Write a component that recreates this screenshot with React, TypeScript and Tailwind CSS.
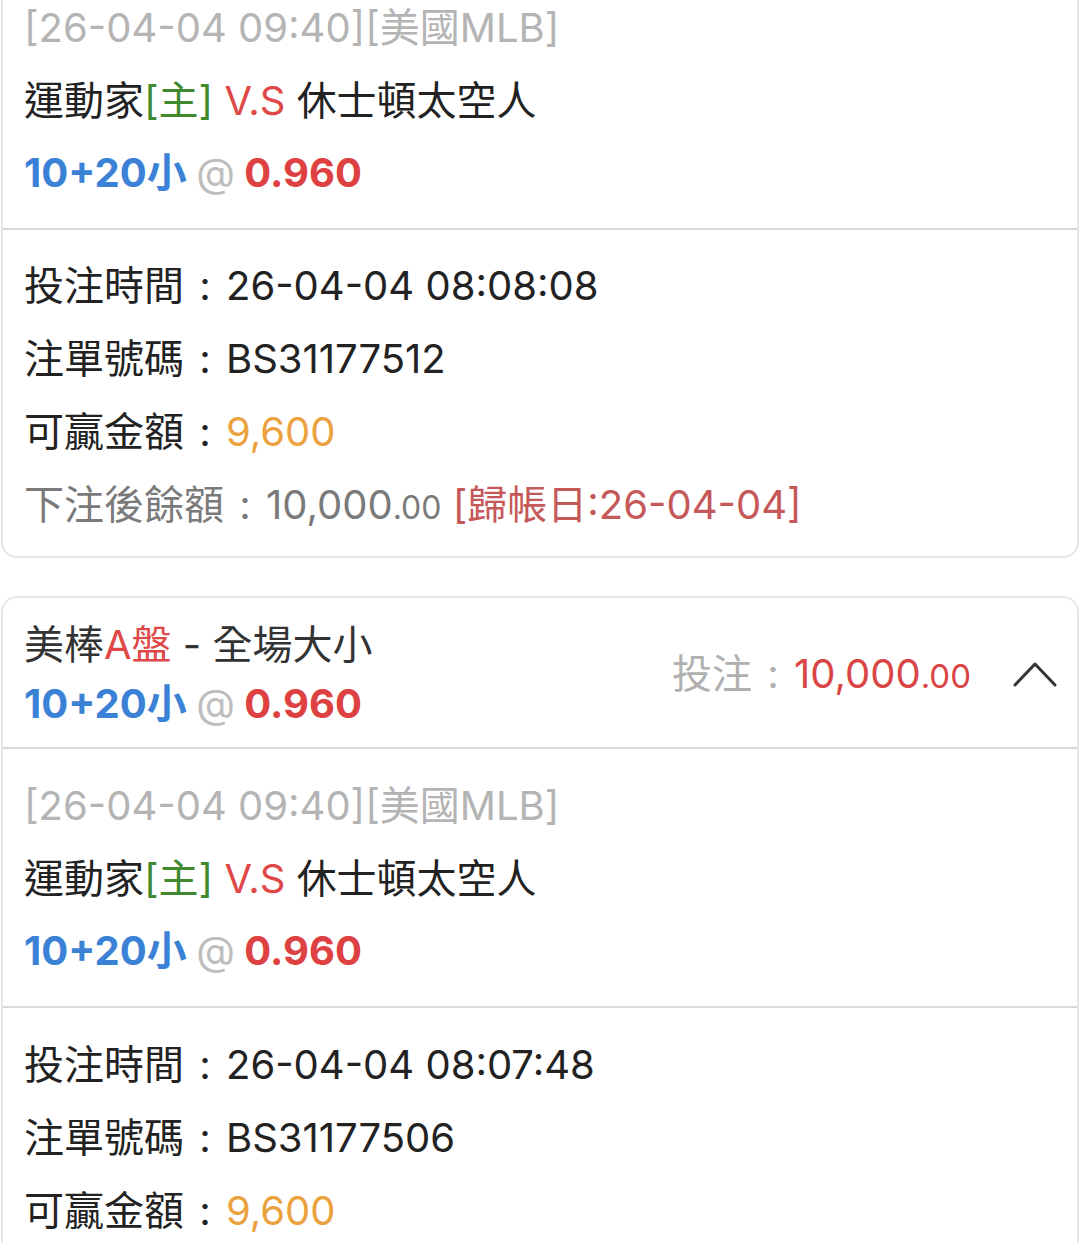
import React from "react";

const F = { fontFamily: 'Inter, "Noto Sans CJK TC", "Noto Sans", sans-serif' };

function Colon() {
  return <span className="inline-block w-[42px] text-center">:</span>;
}

function MatchSection({ first }: { first?: boolean }) {
  return (
    <div className={first ? "-mt-[29px] pt-[21px] pb-[19px] px-[21px]" : "pt-[21px] pb-[19px] px-[21px]"}>
      <div className="h-[72px] leading-[72px] text-[40px] text-[#b4b4b4] whitespace-nowrap">[26-04-04 09:40][美國MLB]</div>
      <div className="h-[73px] leading-[73px] text-[40px] text-[#222] whitespace-nowrap">
        運動家<span className="text-[#3f8a2e]">[主]</span> <span className="text-[#e04848]">V.S</span> 休士頓太空人
      </div>
      <Odds h="h-[72px] leading-[72px]" />
    </div>
  );
}

function Odds({ h }: { h: string }) {
  return (
    <div className={h + " text-[40px] font-bold whitespace-nowrap"}>
      <span className="text-[#3b82d6]">10+20小</span> <span className="text-[#bdbdbd] font-normal">@</span>{" "}
      <span className="text-[#de4141]">0.960</span>
    </div>
  );
}

function Row({ label, children }: { label: string; children: React.ReactNode }) {
  return (
    <div className="h-[73px] leading-[73px] text-[40px] text-[#222] whitespace-nowrap">
      {label}
      <Colon />
      {children}
    </div>
  );
}

export default function App() {
  return (
    <div lang="zh-Hant-TW" className="min-h-[1243px] bg-white overflow-hidden" style={F}>
      {/* card 1 */}
      <div className="mx-[1px] border-2 border-t-0 border-[#e6e6e6] rounded-b-[16px] bg-white">
        <MatchSection first />
        <div className="h-[2px] bg-[#d9d9d9]" />
        <div className="pt-[19px] pb-[15px] px-[21px]">
          <Row label="投注時間">26-04-04 08:08:08</Row>
          <Row label="注單號碼">BS31177512</Row>
          <Row label="可贏金額"><span className="text-[#eba23e]">9,600</span></Row>
          <div className="h-[73px] leading-[73px] text-[40px] text-[#7a7a7a] whitespace-nowrap">
            下注後餘額
            <Colon />
            10,000<span className="text-[32px]">.00</span>{" "}
            <span className="text-[#c5595a]">[歸帳日:26-04-04]</span>
          </div>
        </div>
      </div>

      {/* card 2 */}
      <div className="mt-[38px] mx-[1px] border-2 border-b-0 border-[#e6e6e6] rounded-t-[16px] bg-white">
        <div className="flex items-center pt-[17px] pb-[14px] pl-[21px] pr-[20px]">
          <div className="flex-1">
            <div className="h-[59px] leading-[59px] text-[40px] text-[#333] whitespace-nowrap">
              美棒<span className="text-[#e04848]">A盤</span> - 全場大小
            </div>
            <Odds h="h-[59px] leading-[59px]" />
          </div>
          <div className="text-[40px] whitespace-nowrap text-[#b0b0b0]">
            投注
            <Colon />
            <span className="text-[#d94545]">10,000<span className="text-[33px]">.00</span></span>
          </div>
          <svg className="ml-[42px]" width="44" height="26" viewBox="0 0 44 26" fill="none">
            <path d="M2 24 L22 3 L42 24" stroke="#333" strokeWidth="3" strokeLinecap="round" strokeLinejoin="round" />
          </svg>
        </div>
        <div className="h-[2px] bg-[#d9d9d9]" />
        <MatchSection />
        <div className="h-[2px] bg-[#d9d9d9]" />
        <div className="pt-[20px] px-[21px]">
          <Row label="投注時間">26-04-04 08:07:48</Row>
          <Row label="注單號碼">BS31177506</Row>
          <Row label="可贏金額"><span className="text-[#eba23e]">9,600</span></Row>
        </div>
      </div>
    </div>
  );
}
